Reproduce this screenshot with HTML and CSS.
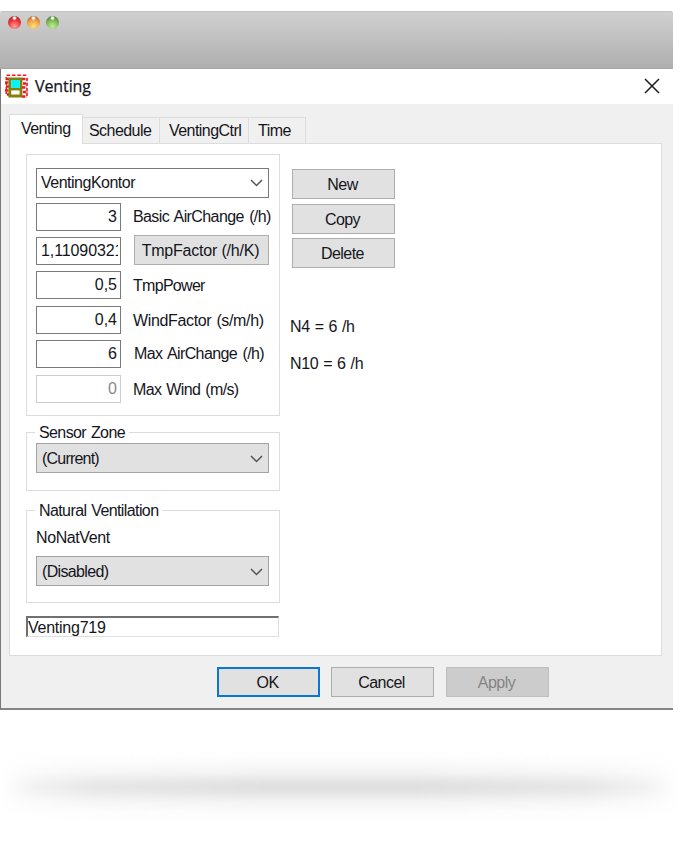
FILE: index.html
```html
<!DOCTYPE html>
<html lang="en">
<head>
<meta charset="utf-8">
<title>Venting</title>
<link rel="stylesheet" href="styles.css">
</head>
<body>
<main class="window">
  <header class="chrome"><i class="light red"></i><i class="light amber"></i><i class="light green"></i></header>
  <section class="dialog">
    <div class="titlebar">
      <svg class="app-icon" width="24" height="24" viewBox="0 0 24 24">
        <path d="M1.5 1.2H22.5" fill="none" stroke="#f01822" stroke-width="1.5" stroke-dasharray="3.6 1.8"/>
        <path d="M1 5H4M17 5H22.5M0 8.5H4M18 9.5H23M1 12.5H4M17 13.5H22M0 16.5H4M18 18H23M2 20.5H4M17 22.5H22" fill="none" stroke="#f01822" stroke-width="2.3" stroke-dasharray="3.4 1.2"/>
        <path d="M1.3 3V20M22 4V22" fill="none" stroke="#f01822" stroke-width="1.6" stroke-dasharray="3 2"/>
        <path d="M4.8 4.8H16V22H4.8Z" fill="#fff" stroke="#85800b" stroke-width="2.8"/>
        <path d="M6.2 6H14.7V14H6.2Z" fill="#00f5fc"/>
        <path d="M4 15.2H17" stroke="#85800b" stroke-width="2.4"/>
      </svg>
      <h1 class="title">Venting</h1>
      <svg class="close" width="16" height="16" viewBox="0 0 16 16"><path d="M1 1L15 15M15 1L1 15" fill="none" stroke="#1c1c1c" stroke-width="1.5"/></svg>
    </div>
    <nav class="tabs">
      <span class="tab active">Venting</span><span class="tab schedule">Schedule</span><span class="tab ctrl">VentingCtrl</span><span class="tab time">Time</span>
    </nav>
    <div class="panel">
      <div class="left">
        <div class="group params">
          <div class="combo white"><span class="kontor">VentingKontor</span><svg class="chev" width="13" height="8" viewBox="0 0 13 8"><path d="M1 1L6.5 6.5L12 1"/></svg></div>
          <div class="row"><span class="input">3</span><span class="label basic">Basic AirChange (/h)</span></div>
          <div class="row"><span class="input long"><span class="clip">1,11090321</span></span><span class="button factor">TmpFactor (/h/K)</span></div>
          <div class="row"><span class="input">0,5</span><span class="label power">TmpPower</span></div>
          <div class="row"><span class="input">0,4</span><span class="label wind">WindFactor (s/m/h)</span></div>
          <div class="row"><span class="input">6</span><span class="label max">Max AirChange (/h)</span></div>
          <div class="row"><span class="input off">0</span><span class="label maxwind">Max Wind (m/s)</span></div>
        </div>
        <div class="group sensor">
          <span class="legend">Sensor Zone</span>
          <div class="combo"><span class="current">(Current)</span><svg class="chev" width="13" height="8" viewBox="0 0 13 8"><path d="M1 1L6.5 6.5L12 1"/></svg></div>
        </div>
        <div class="group natural">
          <span class="legend">Natural Ventilation</span>
          <div class="novent">NoNatVent</div>
          <div class="combo"><span class="disabled">(Disabled)</span><svg class="chev" width="13" height="8" viewBox="0 0 13 8"><path d="M1 1L6.5 6.5L12 1"/></svg></div>
        </div>
        <div class="sunken">Venting719</div>
      </div>
      <div class="right">
        <span class="button new">New</span>
        <span class="button copy">Copy</span>
        <span class="button delete">Delete</span>
        <span class="result n4">N4 = 6 /h</span>
        <span class="result n10">N10 = 6 /h</span>
      </div>
    </div>
    <footer class="actions">
      <span class="button ok">OK</span><span class="button cancel">Cancel</span><span class="button apply">Apply</span>
    </footer>
  </section>
</main>
<div class="shadow"></div>
</body>
</html>
```

FILE: styles.css
```css
* { box-sizing: border-box; }
body {
  margin: 0;
  width: 680px;
  height: 850px;
  padding-top: 11px;
  overflow: hidden;
  background: #fff;
  color: #15151c;
  font: 16px/20px "Liberation Sans", Arial, sans-serif;
  letter-spacing: -0.55px;
  white-space: nowrap;
}
.window { width: 673px; }
.chrome {
  height: 58px;
  display: flex;
  gap: 6px;
  padding: 4px 0 0 8px;
  border-top: 1px solid #c2c2c2;
  border-bottom: 1px solid #a6a6a6;
  border-radius: 2px 2px 0 0;
  background: linear-gradient(#d0d0d0, #afafaf);
}
.light { width: 13px; height: 13px; border-radius: 50%; }
.red { background: radial-gradient(circle at 50% 16%, #fff 0 6%, transparent 20%), radial-gradient(circle at 50% 80%, #ffa09c, #ee383b 50%, #8c2022 95%); }
.amber { background: radial-gradient(circle at 50% 16%, #fff 0 6%, transparent 20%), radial-gradient(circle at 50% 80%, #ffe07c, #f0a348 50%, #935022 95%); }
.green { background: radial-gradient(circle at 50% 16%, #fff 0 6%, transparent 20%), radial-gradient(circle at 50% 80%, #c5ec94, #7dbb55 50%, #3b692a 95%); }
.dialog {
  height: 641px;
  border-left: 1px solid #777;
  border-bottom: 2px solid #858585;
  background: #f0f0f0;
}
.titlebar { height: 35px; display: flex; align-items: center; padding: 0 13px 2px 4px; background: #fff; }
.title { margin: 0 0 0 6px; font: 500 16px/22px "Open Sans", "Noto Sans", sans-serif; letter-spacing: -0.1px; -webkit-text-stroke: 0.25px #15151c; }
.close { margin-left: auto; }
.tabs { height: 39px; margin-left: 8px; padding-top: 10px; display: flex; align-items: flex-end; }
.tab { height: 26px; padding: 3px 0 0 6px; border: 1px solid #dcdcdc; border-left: 0; border-bottom: 0; }
.tab.active { width: 74px; height: 30px; margin-bottom: -1px; padding: 4px 0 0 11px; background: #fff; border-left: 1px solid #dcdcdc; z-index: 1; }
.schedule { width: 77px; }
.ctrl { width: 89px; padding-left: 9px; }
.time { width: 57px; padding-left: 9px; }
.panel { width: 653px; height: 513px; margin-left: 8px; border: 1px solid #dcdcdc; background: #fff; display: flex; padding: 10px 0 0 16px; }
.left { width: 254px; }
.group { border: 1px solid #dcdcdc; padding: 0 10px 0 9px; width: 254px; }
.params { height: 262px; padding-top: 13px; display: grid; grid-template-columns: 233px; grid-template-rows: 30px 33px 34px 34px 35px 34px 35px; }
.combo { width: 233px; height: 30px; border: 1px solid #a3a3a3; background: #e1e1e1; display: flex; align-items: center; justify-content: space-between; padding: 1px 5px 0 5px; }
.combo.white { background: #fff; border-color: #7a7a7a; padding: 0 5px 1px 4px; }
.kontor { letter-spacing: -0.5px; }
.chev path { fill: none; stroke: #555; stroke-width: 1.5; }
.row { display: flex; align-items: flex-end; }
.input { width: 85px; height: 28px; flex: none; border: 1px solid #7a7a7a; background: #fff; text-align: right; padding: 3px 3px 0 4px; letter-spacing: 0; }
.input.long { text-align: left; }
.clip { display: block; width: 77px; overflow: hidden; letter-spacing: -0.1px; }
.input.off { color: #898989; border-color: #ccc; }
.label { height: 28px; padding: 4px 0 0 12px; }
.basic { letter-spacing: -0.6px; word-spacing: 1.5px; }
.wind { padding-top: 5px; letter-spacing: -0.35px; word-spacing: 1px; }
.max { padding-left: 13px; letter-spacing: -0.6px; word-spacing: 1.5px; }
.maxwind { padding-top: 5px; word-spacing: 1px; letter-spacing: -0.6px; }
.power { padding-top: 5px; letter-spacing: -0.7px; }
.button { display: flex; align-items: center; justify-content: center; height: 30px; width: 103px; padding: 1px 2px 0 0; border: 1px solid #adadad; background: #e1e1e1; }
.factor { width: 135px; margin-left: 13px; letter-spacing: -0.2px; }
.sensor { margin-top: 16px; height: 59px; }
.legend { display: block; width: max-content; height: 20px; margin: -10px 0 0 -1px; padding: 0 4px; background: #fff; letter-spacing: -0.6px; word-spacing: 1px; }
.current { letter-spacing: -0.8px; }
.disabled { letter-spacing: -0.65px; }
.natural { margin-top: 19px; height: 93px; }
.novent { height: 20px; margin: 7px 0 8px 0; letter-spacing: -0.4px; }
.sunken { width: 253px; height: 21px; margin-top: 13px; border: 1px solid #dfdfdf; border-top: 2px solid #707070; border-left: 2px solid #707070; overflow: hidden; line-height: 20px; letter-spacing: -0.25px; }
.right { margin-left: 12px; padding-top: 15px; display: flex; flex-direction: column; }
.copy { margin-top: 5px; }
.delete { margin-top: 4px; }
.result { height: 20px; margin-left: -2px; letter-spacing: -0.35px; word-spacing: 0.8px; }
.n4 { margin-top: 49px; }
.n10 { margin-top: 17px; }
.actions { display: flex; padding: 11px 0 0 216px; }
.ok { border: 2px solid #0a76d8; }
.cancel { margin-left: 11px; }
.apply { margin-left: 12px; color: #858585; background: #ccc; border-color: #bfbfbf; }
.shadow {
  height: 74px;
  margin-top: 40px;
  background: linear-gradient(transparent, #fcfcfc 14%, #f3f3f3 30%, #e3e3e3 43%, #dfdfdf 50%, #e3e3e3 57%, #f3f3f3 70%, #fcfcfc 85%, transparent);
  -webkit-mask-image: linear-gradient(90deg, transparent 0, rgba(0,0,0,.4) 5%, rgba(0,0,0,.75) 14%, #000 40%, #000 60%, rgba(0,0,0,.75) 86%, rgba(0,0,0,.4) 95%, transparent 100%);
  mask-image: linear-gradient(90deg, transparent 0, rgba(0,0,0,.4) 5%, rgba(0,0,0,.75) 14%, #000 40%, #000 60%, rgba(0,0,0,.75) 86%, rgba(0,0,0,.4) 95%, transparent 100%);
}
```
